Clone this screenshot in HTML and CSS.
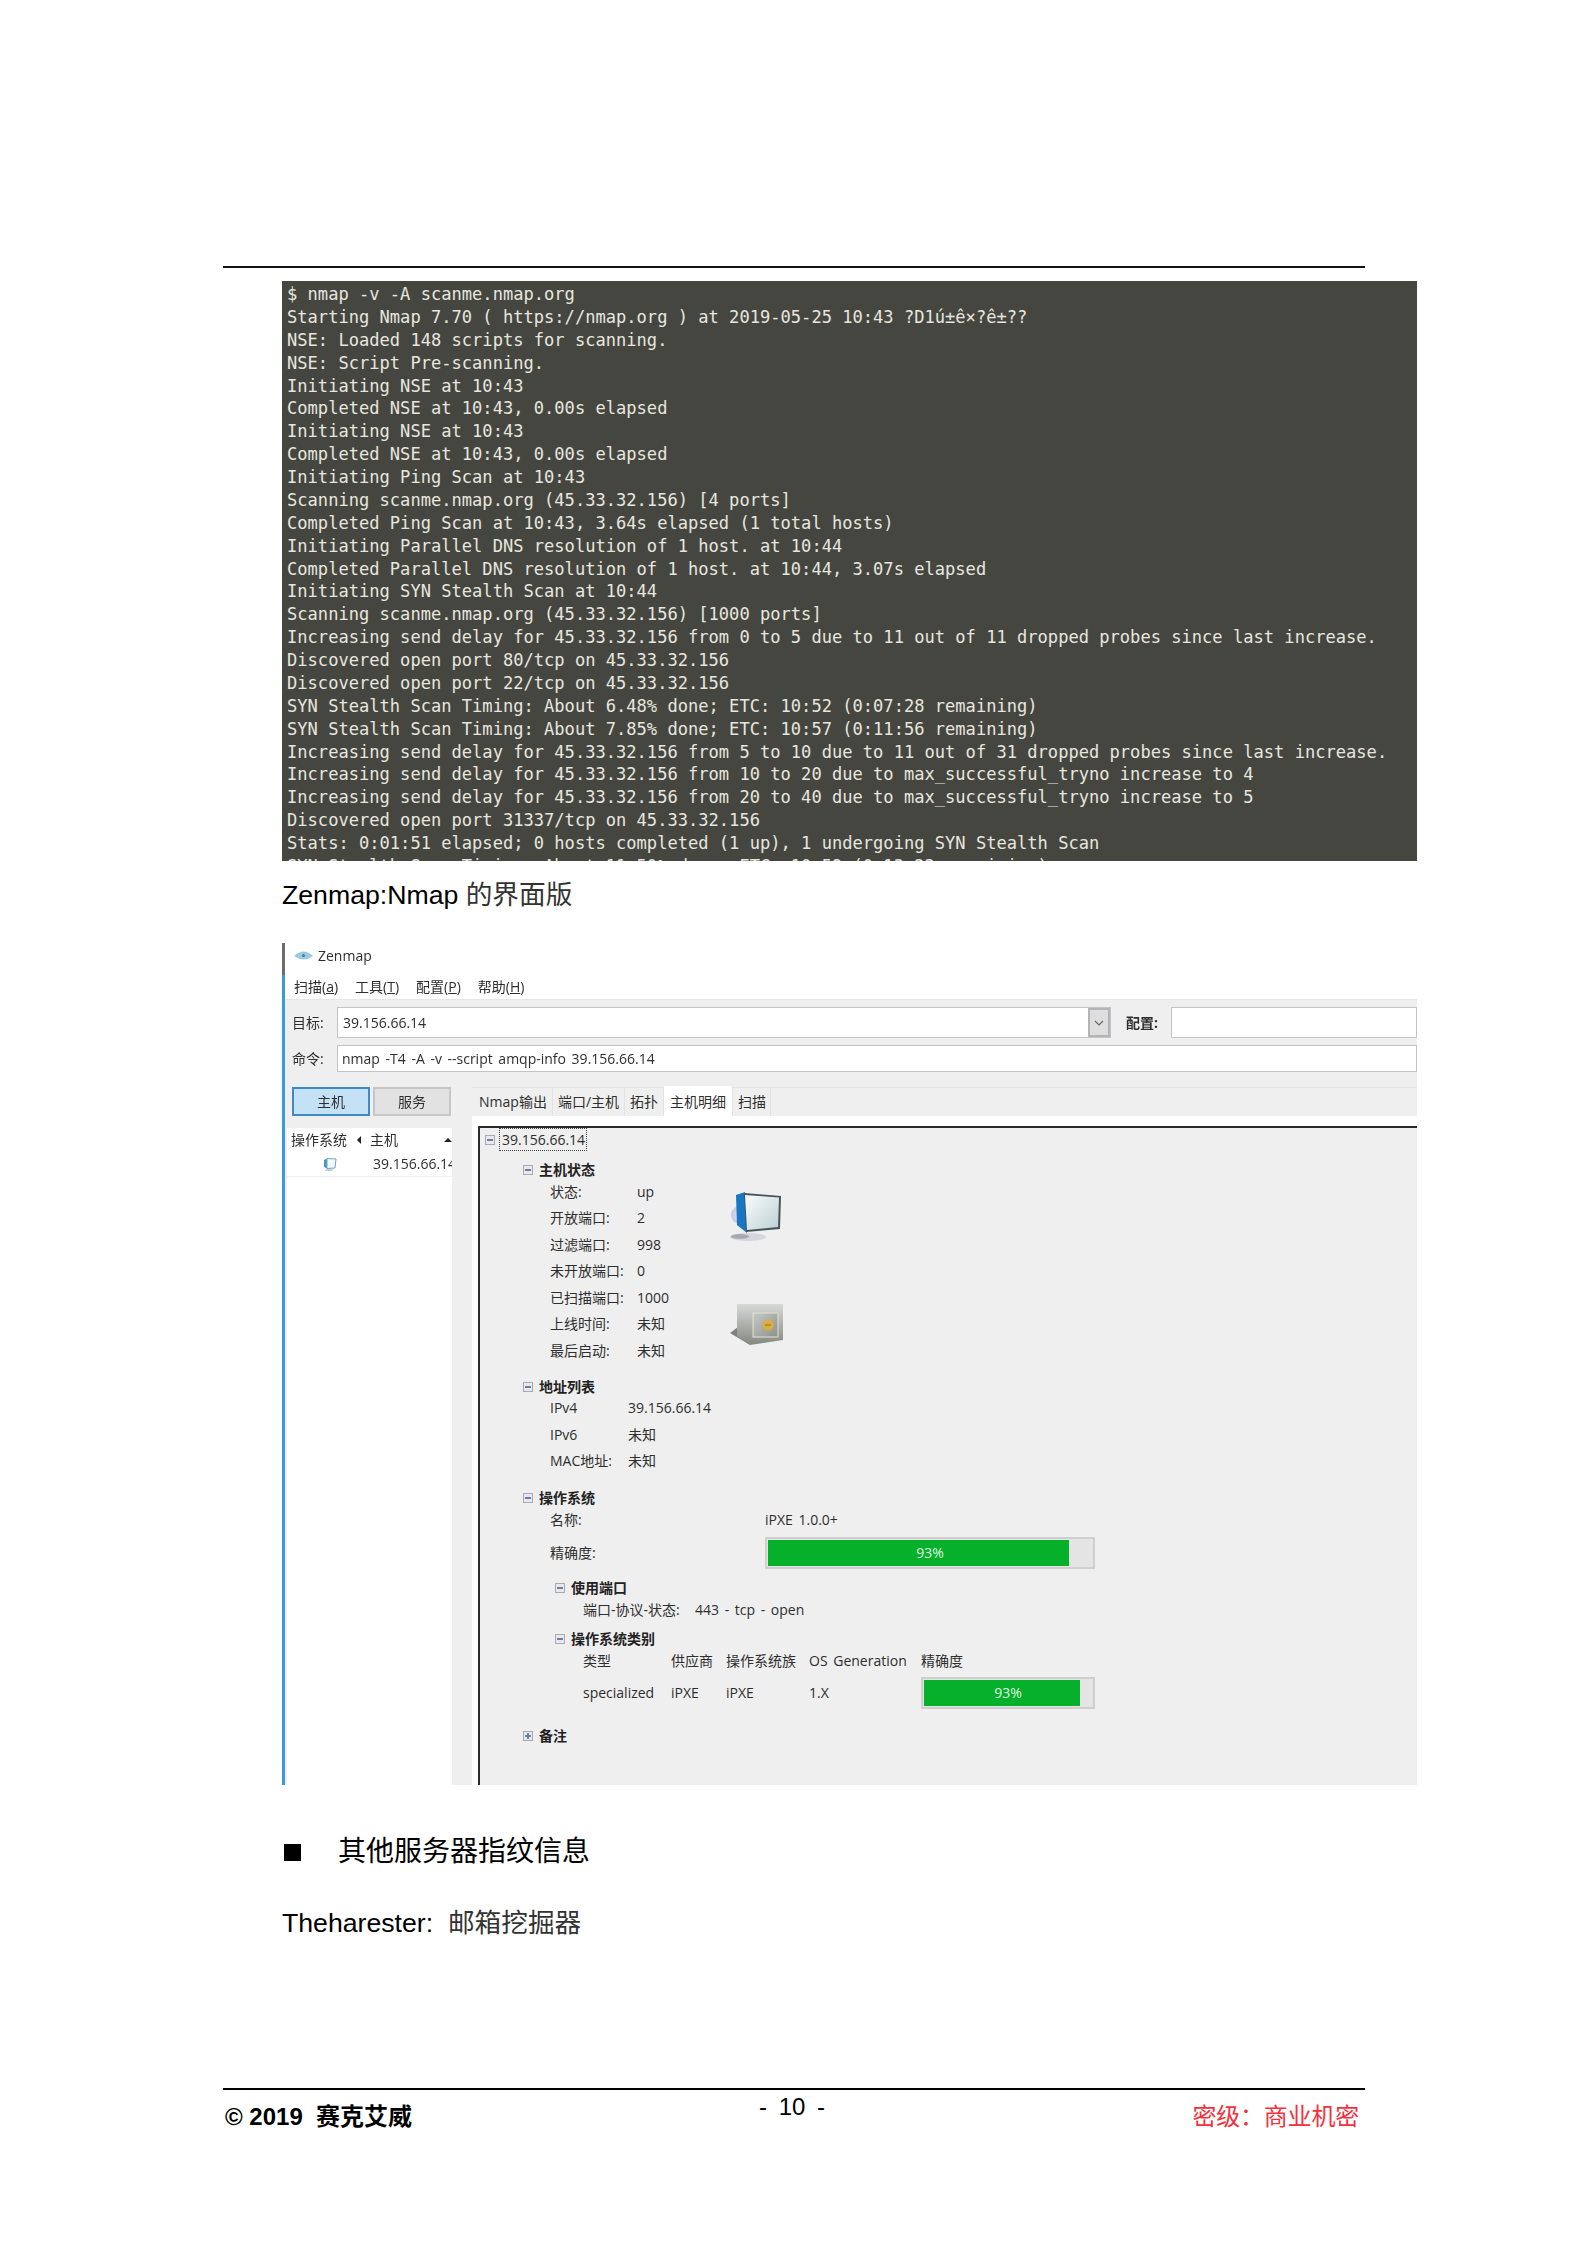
FILE: index.html
```html
<!DOCTYPE html>
<html lang="zh-CN">
<head>
<meta charset="utf-8">
<title>Zenmap</title>
<link rel="stylesheet" href="styles.css">
</head>
<body>
<div class="page">
  <div class="rule"></div>
  <div class="content">
<pre class="terminal">$ nmap -v -A scanme.nmap.org
Starting Nmap 7.70 ( https://nmap.org ) at 2019-05-25 10:43 ?D1ú±ê×?ê±??
NSE: Loaded 148 scripts for scanning.
NSE: Script Pre-scanning.
Initiating NSE at 10:43
Completed NSE at 10:43, 0.00s elapsed
Initiating NSE at 10:43
Completed NSE at 10:43, 0.00s elapsed
Initiating Ping Scan at 10:43
Scanning scanme.nmap.org (45.33.32.156) [4 ports]
Completed Ping Scan at 10:43, 3.64s elapsed (1 total hosts)
Initiating Parallel DNS resolution of 1 host. at 10:44
Completed Parallel DNS resolution of 1 host. at 10:44, 3.07s elapsed
Initiating SYN Stealth Scan at 10:44
Scanning scanme.nmap.org (45.33.32.156) [1000 ports]
Increasing send delay for 45.33.32.156 from 0 to 5 due to 11 out of 11 dropped probes since last increase.
Discovered open port 80/tcp on 45.33.32.156
Discovered open port 22/tcp on 45.33.32.156
SYN Stealth Scan Timing: About 6.48% done; ETC: 10:52 (0:07:28 remaining)
SYN Stealth Scan Timing: About 7.85% done; ETC: 10:57 (0:11:56 remaining)
Increasing send delay for 45.33.32.156 from 5 to 10 due to 11 out of 31 dropped probes since last increase.
Increasing send delay for 45.33.32.156 from 10 to 20 due to max_successful_tryno increase to 4
Increasing send delay for 45.33.32.156 from 20 to 40 due to max_successful_tryno increase to 5
Discovered open port 31337/tcp on 45.33.32.156
Stats: 0:01:51 elapsed; 0 hosts completed (1 up), 1 undergoing SYN Stealth Scan
SYN Stealth Scan Timing: About 11.50% done; ETC: 10:59 (0:13:22 remaining)</pre>

    <p class="para caption">Zenmap:Nmap <span class="zh">的界面版</span></p>

    <div class="window">
      <div class="titlebar">
        <svg class="eye" viewBox="0 0 19 12"><path d="M0 6Q9.5-3 19 6 9.5 13 0 6Z" fill="#9ccbe0"/><circle cx="9.5" cy="5.5" r="1.5" fill="#3f7c98"/></svg>
        <span>Zenmap</span>
      </div>
      <div class="menubar">
        <span>扫描(<u>a</u>)</span><span>工具(<u>T</u>)</span><span>配置(<u>P</u>)</span><span>帮助(<u>H</u>)</span>
      </div>
      <div class="win-body">
        <div class="form-row target-row">
          <label class="form-label">目标:</label>
          <div class="field combo"><span>39.156.66.14</span><i class="combo-btn"><svg viewBox="0 0 10 6"><path d="M1 1l4 4 4-4" fill="none" stroke="#666" stroke-width="1.2"/></svg></i></div>
          <label class="form-label strong profile-label">配置:</label>
          <div class="field profile"></div>
        </div>
        <div class="form-row command-row">
          <label class="form-label">命令:</label>
          <div class="field wide"><span>nmap -T4 -A -v --script amqp-info 39.156.66.14</span></div>
        </div>
        <div class="main">
          <div class="side">
            <div class="side-buttons">
              <div class="side-btn on">主机</div>
              <div class="side-btn">服务</div>
            </div>
            <div class="host-list">
              <div class="host-head">
                <div class="hcol os">操作系统<i class="arrow-left"></i></div>
                <div class="hcol host">主机<i class="arrow-up"></i></div>
              </div>
              <div class="host-row">
                <svg class="mini-pc" viewBox="0 0 14 14"><path d="M1 3 5 1v11L1 10Z" fill="#4f93c8"/><path d="M4 1.5l9 .5-1 9-8 .5Z" fill="#f3f8fb" stroke="#6fa5c8"/><ellipse cx="6" cy="13" rx="4" ry="1" fill="#bcd"/></svg>
                <span>39.156.66.14</span>
              </div>
            </div>
          </div>
          <div class="results">
            <div class="tabs">
              <div class="tab t1">Nmap输出</div>
              <div class="tab t2">端口/主机</div>
              <div class="tab t3">拓扑</div>
              <div class="tab t4 active">主机明细</div>
              <div class="tab t5">扫描</div>
            </div>
            <div class="pane-wrap">
              <div class="pane">
                <div class="root-node"><i class="box minus"></i><span class="focus">39.156.66.14</span></div>

                <div class="head h-status"><i class="box minus"></i>主机状态</div>
                <div class="status">
                  <div class="kv kv-status">
                    <span>状态:</span><span>up</span>
                    <span>开放端口:</span><span>2</span>
                    <span>过滤端口:</span><span>998</span>
                    <span>未开放端口:</span><span>0</span>
                    <span>已扫描端口:</span><span>1000</span>
                    <span>上线时间:</span><span>未知</span>
                    <span>最后启动:</span><span>未知</span>
                  </div>
                  <div class="status-icons">
                    <svg class="pc-icon" viewBox="0 0 53 50">
                      <defs>
                        <linearGradient id="scr" x1="0" y1="0" x2="1" y2="1"><stop offset="0" stop-color="#fafcfc"/><stop offset="1" stop-color="#bdd0d4"/></linearGradient>
                        <radialGradient id="bulb"><stop offset="0" stop-color="#e2e4f2"/><stop offset="1" stop-color="#c3c7e0"/></radialGradient>
                      </defs>
                      <ellipse cx="18" cy="45" rx="18" ry="4" fill="#d5d7e0"/>
                      <ellipse cx="10" cy="44.5" rx="9" ry="2.5" fill="#a6aab0"/>
                      <circle cx="10" cy="23" r="9" fill="url(#bulb)"/>
                      <path d="M6 3 15 0 17 41 7 33Z" fill="#1777c4"/>
                      <path d="M14 1 51 4 50 37 16 40Z" fill="#46555b"/>
                      <path d="M15 3 49 5.5 48 35 17 38Z" fill="url(#scr)"/>
                    </svg>
                    <svg class="safe-icon" viewBox="0 0 54 42">
                      <defs>
                        <linearGradient id="steel" x1="0" y1="0" x2="0" y2="1"><stop offset="0" stop-color="#d6d9d6"/><stop offset="1" stop-color="#83897f"/></linearGradient>
                        <linearGradient id="door" x1="0" y1="0" x2="1" y2="1"><stop offset="0" stop-color="#c6cac6"/><stop offset="1" stop-color="#8d918c"/></linearGradient>
                      </defs>
                      <path d="M0 30 8 24 20 42Z" fill="#7f817d"/>
                      <path d="M7 1 53 1V37L20 42 7 33Z" fill="url(#steel)"/>
                      <rect x="23" y="10" width="25" height="24" fill="url(#door)" stroke="#e4e2cf"/>
                      <circle cx="38" cy="22" r="5.5" fill="#dcae3c"/>
                      <path d="M35 22h6" stroke="#8e6e22"/>
                    </svg>
                  </div>
                </div>

                <div class="head h-addr"><i class="box minus"></i>地址列表</div>
                <div class="kv kv-addr">
                  <span>IPv4</span><span>39.156.66.14</span>
                  <span>IPv6</span><span>未知</span>
                  <span>MAC地址:</span><span>未知</span>
                </div>

                <div class="head h-os"><i class="box minus"></i>操作系统</div>
                <div class="os-grid">
                  <span class="os-name">名称:</span><span class="os-name">iPXE 1.0.0+</span>
                  <span>精确度:</span>
                  <div class="bar big"><div class="fill" style="width:93%"></div><span class="bar-label">93%</span></div>
                </div>

                <div class="head sub h-port"><i class="box minus"></i>使用端口</div>
                <div class="port-row"><span>端口-协议-状态:</span><span>443 - tcp - open</span></div>

                <div class="head sub h-class"><i class="box minus"></i>操作系统类别</div>
                <div class="os-table">
                  <span class="th">类型</span><span class="th">供应商</span><span class="th">操作系统族</span><span class="th">OS Generation</span><span class="th">精确度</span>
                  <span>specialized</span><span>iPXE</span><span>iPXE</span><span>1.X</span>
                  <div class="bar small"><div class="fill" style="width:93%"></div><span class="bar-label">93%</span></div>
                </div>

                <div class="head h-note"><i class="box plus"></i>备注</div>
              </div>
            </div>
          </div>
        </div>
      </div>
    </div>

    <h2 class="section"><i class="bullet"></i>其他服务器指纹信息</h2>
    <p class="para harvester">Theharester:&nbsp; <span class="zh">邮箱挖掘器</span></p>
  </div>

  <footer class="footer">
    <div class="copy">© 2019&nbsp; 赛克艾威</div>
    <div class="pageno">- 10 -</div>
    <div class="secret">密级：商业机密</div>
  </footer>
</div>
</body>
</html>
```

FILE: styles.css
```css
* { box-sizing: border-box; }
html, body { margin: 0; padding: 0; background: #fff; }
body { font-family: "Liberation Sans", "Noto Sans CJK SC", sans-serif; color: #000; }
i { display: block; font-style: normal; }

.page { width: 1587px; height: 2245px; padding: 266px 222px 0 223px; }
.rule { height: 2px; background: #111; width: 1142px; }
.content { padding-left: 59px; width: 1194px; }

.terminal {
  margin: 13px 0 0;
  height: 580px;
  overflow: hidden;
  padding: 2px 5px 0;
  background: #464641;
  color: #e6e6df;
  font: 17.09px/22.87px "DejaVu Sans Mono", monospace;
  white-space: pre;
}

.para { margin: 0; font-size: 26.67px; line-height: 40px; height: 40px; }
.caption { margin-top: 14px; }
.zh { color: #333; }

/* Zenmap window */
.window {
  margin-top: 28px;
  width: 1135px;
  height: 842px;
  display: flex;
  flex-direction: column;
  border-left: 3px solid #3f97dc;
  font: 14px/20px "Open Sans", "Noto Sans CJK SC", sans-serif;
  word-spacing: 2px;
  color: #2e2e2e;
  filter: blur(0.35px);
  position: relative;
}
.titlebar { height: 32px; display: flex; align-items: center; gap: 5px; margin-left: -3px; border-left: 3px solid #6d6d6d; padding: 0 0 6px 9px; flex: none; }
.eye { width: 19px; height: 12px; }
.menubar { height: 24px; flex: none; display: flex; gap: 17px; padding-left: 9px; align-items: center; }
.win-body { flex: 1; min-height: 0; background: #efefef; border-top: 1px solid #e6e6e6; display: flex; flex-direction: column; padding-top: 7px; }

.form-row { display: flex; align-items: center; flex: none; }
.form-label { width: 52px; padding-left: 7px; flex: none; }
.target-row { height: 31px; }
.command-row { height: 27px; margin-top: 7px; }
.field { height: 100%; background: #fff; border: 1px solid #c4c4c8; display: flex; align-items: center; padding-left: 5px; }
.combo { width: 774px; padding-right: 0; justify-content: space-between; }
.combo-btn { width: 22px; height: 100%; background: #dedede; border: 2px solid #b4b4b8; display: flex; align-items: center; justify-content: center; flex: none; }
.combo-btn svg { width: 10px; height: 6px; }
.profile-label { width: 60px; padding-left: 15px; font-weight: 700; }
.profile { flex: 1; }
.wide { flex: 1; padding-left: 4px; }

.main { flex: 1; display: flex; min-height: 0; margin-top: 15px; }
.side { width: 167px; flex: none; display: flex; flex-direction: column; }
.side-buttons { display: flex; gap: 3px; padding-left: 7px; height: 29px; flex: none; }
.side-btn { width: 78px; display: flex; align-items: center; justify-content: center; background: #e2e2e2; border: 2px solid #c6c6c6; }
.side-btn.on { background: #c5e1f6; border-color: #3b8bc8; }
.host-list { flex: 1; margin: 12px 0 0 2px; background: #fff; }
.host-head { height: 23px; display: flex; gap: 2px; background: #fff; }
.hcol { display: flex; align-items: center; justify-content: space-between; }
.hcol.os { width: 79px; padding: 0 5px 0 4px; }
.hcol.host { flex: 1; padding: 0 0 0 2px; }
.arrow-left { width: 0; height: 0; border: 4px solid transparent; border-left-width: 0; border-right: 4px solid #222; }
.arrow-up { width: 0; height: 0; border: 4px solid transparent; border-top-width: 0; border-bottom: 4px solid #222; }
.host-row { height: 26px; display: flex; align-items: center; padding-left: 36px; gap: 36px; overflow: hidden; white-space: nowrap; background: #fff; border-bottom: 1px solid #f0f0f0; }
.mini-pc { width: 14px; height: 14px; flex: none; }

.results { flex: 1; min-width: 0; margin-left: 20px; display: flex; flex-direction: column; }
.tabs { display: flex; height: 29px; flex: none; background: #efefef; border-top: 1px solid #e4e4e4; align-items: stretch; }
.tab { display: flex; align-items: center; justify-content: center; background: #efefef; border-right: 1px solid #e2e2e2; white-space: nowrap; }
.t1 { width: 81px; padding-left: 2px; } .t2 { width: 72px; } .t3 { width: 39px; } .t4 { width: 69px; } .t5 { width: 38px; padding-left: 1px; }
.tab.active { background: #fff; margin: -2px 0 -1px; }
.pane-wrap { flex: 1; min-height: 0; background: #fff; padding: 10px 0 0 6px; display: flex; }
.pane { flex: 1; min-width: 0; background: #efefef; border-top: 2px solid #2b2b2b; border-left: 2px solid #2b2b2b; }

.box { width: 10px; height: 10px; flex: none; border: 1px solid #a9a9b4; background: #e8e8f0; position: relative; }
.box::before { content: ""; position: absolute; left: 1px; right: 1px; top: 3px; height: 2px; background: #6f7f99; }
.plus::after { content: ""; position: absolute; top: 1px; bottom: 1px; left: 3px; width: 2px; background: #6f7f99; }

.root-node { height: 23px; display: flex; align-items: center; padding-left: 5px; gap: 4px; }
.focus { border: 1px dotted #444; padding: 0 1px 0 2px; height: 23px; line-height: 21px; }

.head { height: 19px; display: flex; align-items: center; gap: 6px; padding-left: 43px; font-weight: 700; color: #222; }
.head.sub { padding-left: 75px; }
.h-status { margin-top: 9px; }
.h-addr { margin-top: 13px; }
.h-os { margin-top: 13.5px; }
.h-port { margin-top: 9.5px; }
.h-class { margin-top: 5.5px; }
.h-note { margin-top: 17.5px; }

.status { display: flex; padding-left: 70px; }
.kv { display: grid; grid-auto-rows: 26.5px; align-items: center; }
.kv-status { grid-template-columns: 87px 93px; margin-top: -0.5px; }
.kv-addr { grid-template-columns: 78px auto; padding-left: 70px; justify-content: start; margin-top: -1px; }
.status-icons { display: flex; flex-direction: column; gap: 61px; padding-top: 13px; }
.pc-icon { width: 53px; height: 50px; }
.safe-icon { width: 54px; height: 42px; }

.os-grid { display: grid; grid-template-columns: 215px 330px; grid-template-rows: 25px 32px; row-gap: 4.5px; padding-left: 70px; align-items: center; }
.bar { height: 32px; background: #e4e4e4; border: 2px solid #cfcfcf; padding: 1px; display: grid; }
.fill { grid-area: 1 / 1; background: #07b02a; }
.bar-label { grid-area: 1 / 1; place-self: center; color: #dff5e3; }
.big { width: 330px; }
.small { width: 174px; }

.port-row { height: 26.5px; padding-left: 103px; display: grid; grid-template-columns: 112px auto; align-items: center; justify-content: start; }
.os-table { display: grid; grid-template-columns: 88px 55px 83px 112px 174px; grid-template-rows: 25px 32px; row-gap: 3.5px; padding-left: 103px; align-items: center; justify-content: start; }

/* lower text */
.section { margin: 0; margin-top: 46px; height: 42px; display: flex; align-items: center; font-size: 28px; font-weight: 400; line-height: 42px; }
.bullet { width: 17px; height: 17px; background: #000; margin: 0 37px 0 2px; }
.harvester { margin-top: 30px; }

/* footer */
.footer {
  position: absolute;
  left: 223px;
  top: 2088px;
  width: 1142px;
  border-top: 2px solid #000;
  display: grid;
  grid-template-columns: 1fr auto 1fr;
  font-size: 24px;
  line-height: 30px;
  padding: 0 6px 0 2px;
}
.copy { font-weight: 700; margin-top: 12px; }
.pageno { margin-top: 2px; word-spacing: 5px; }
.secret { color: #f5303c; text-align: right; margin-top: 12px; letter-spacing: -0.2px; }
```
